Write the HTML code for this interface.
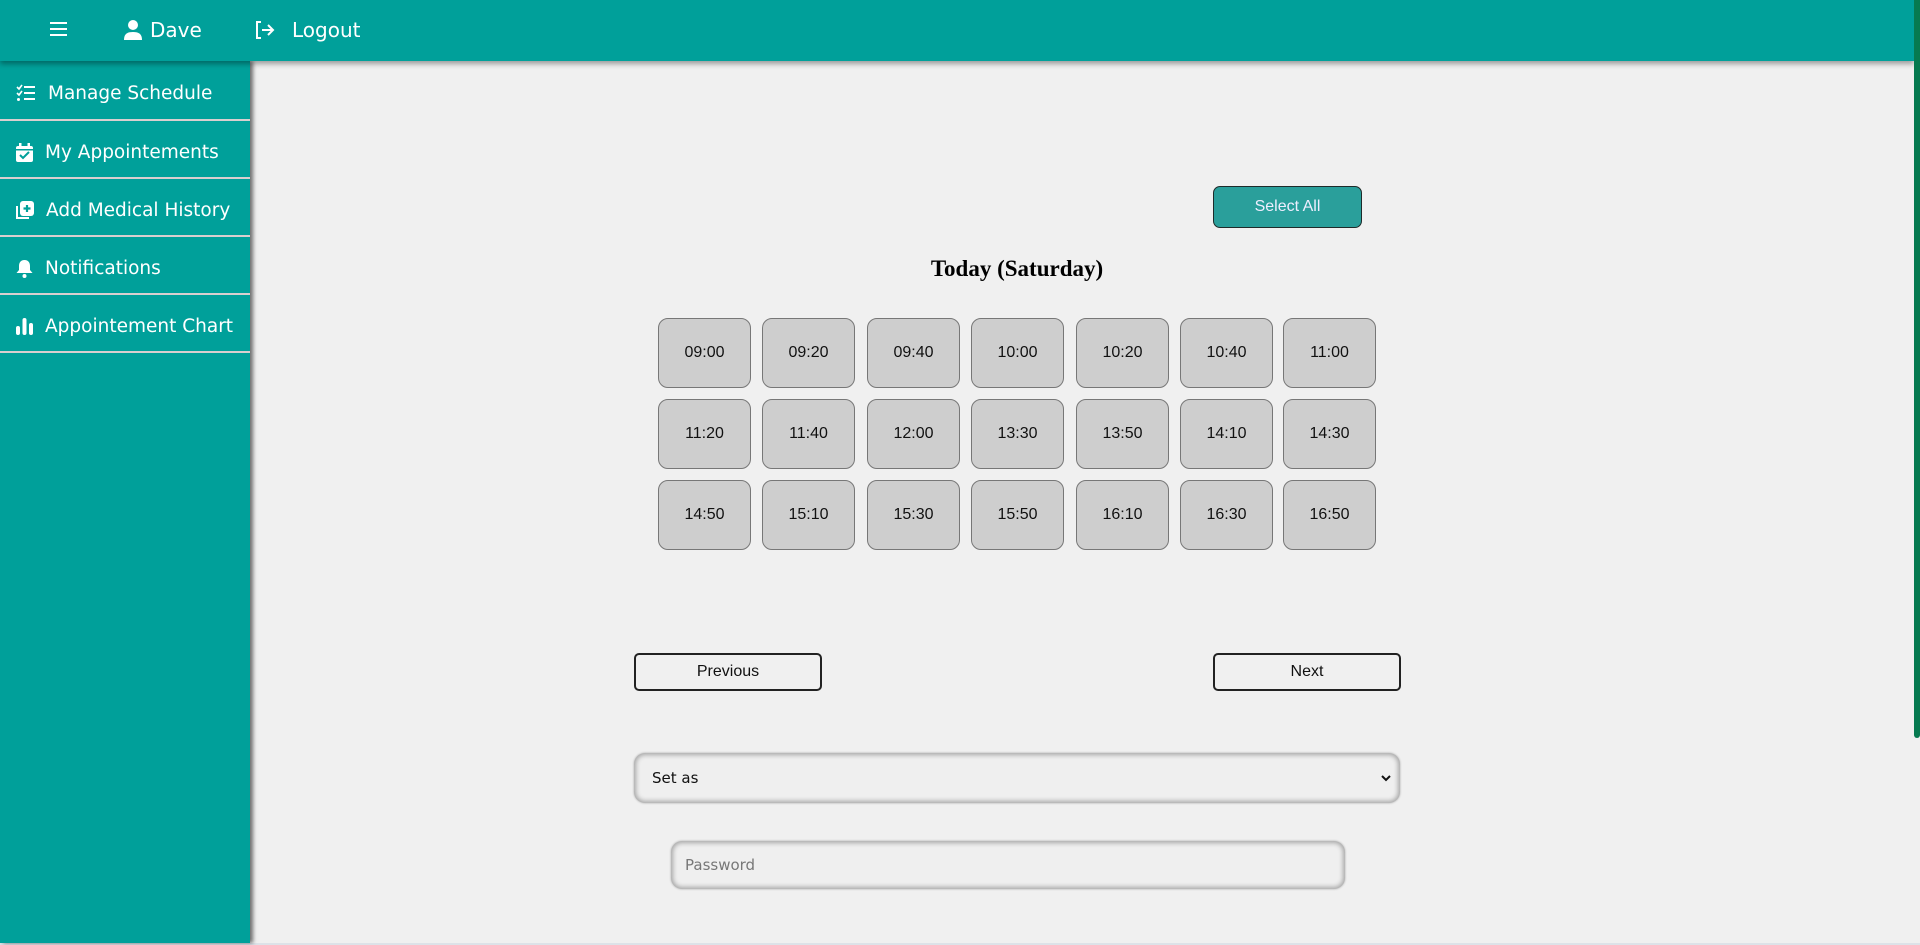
<!DOCTYPE html>
<html><head><meta charset="utf-8"><style>
*{box-sizing:border-box;margin:0;padding:0}
html,body{width:1920px;height:945px;overflow:hidden;background:#f0f0f0;font-family:"Liberation Sans",Arial,sans-serif}
.hdr{position:absolute;left:0;top:0;width:1914px;height:61px;background:#00a09a;box-shadow:0 3px 5px rgba(0,0,0,.35);z-index:3;color:#fff;font-family:"DejaVu Sans",sans-serif;font-size:20px}
.hdr .it{position:absolute;top:18px;display:flex;align-items:center;gap:8px}
.side{position:absolute;left:0;top:61px;width:250px;height:882px;background:#00a09a;box-shadow:3px 0 4px rgba(0,0,0,.55);z-index:2;color:#fff;font-family:"DejaVu Sans",sans-serif;font-size:18.5px}
.side .row{height:58px;border-bottom:2px solid #d9cfcf;display:flex;align-items:center;padding-left:16px;padding-top:6px;gap:12px}
.side .row:first-child{height:60px}
.scroll{position:absolute;right:0;top:0;width:6px;height:738px;background:#067a50;border-radius:0 0 3px 3px;z-index:4}
.sel{position:absolute;left:1213px;top:186px;width:149px;height:42px;background:#2a9f9b;border:1.5px solid #1e2b2a;border-radius:7px;color:#eef;font-size:16px;display:flex;align-items:center;justify-content:center}
.title{position:absolute;left:817px;width:400px;top:256px;text-align:center;font-family:"Liberation Serif",serif;font-weight:bold;font-size:23px;color:#000}
.cell{position:absolute;width:93px;height:70px;background:#cecece;border:1px solid #777;border-radius:10px;display:flex;align-items:center;justify-content:center;font-size:16px;color:#111}
.btn{position:absolute;top:653px;width:188px;height:38px;border:2px solid #222;border-radius:5px;display:flex;align-items:center;justify-content:center;font-size:16px;color:#111;background:#f0f0f0}
.inp{position:absolute;background:#efefef;border-radius:11px;box-shadow:inset 0 0 5px 2px rgba(0,0,0,.3),0 0 2px rgba(0,0,0,.3);font-family:"DejaVu Sans",sans-serif;font-size:15px;display:flex;align-items:center}
</style></head><body>
<div class="hdr">
 <div class="it" style="left:50px;top:21px"><svg width="17" height="16" viewBox="0 0 17 16"><path d="M0 2h17M0 8h17M0 14h17" stroke="#fff" stroke-width="2"/></svg></div>
 <div class="it" style="left:124px"><svg width="18" height="20" viewBox="0 0 18 20"><circle cx="9" cy="5" r="5" fill="#fff"/><path d="M0 20c0-6 3-8 9-8s9 2 9 8z" fill="#fff"/></svg><span>Dave</span></div>
 <div class="it" style="left:254px"><svg width="22" height="20" viewBox="0 0 22 20"><path d="M7 2H3v16h4" stroke="#fff" stroke-width="2" fill="none"/><path d="M8 10h11M14 5l5 5-5 5" stroke="#fff" stroke-width="2" fill="none"/></svg><span style="margin-left:8px">Logout</span></div>
</div>
<div class="side">
 <div class="row"><svg width="20" height="18" viewBox="0 0 20 18"><path d="M1 3l2 2 3-4M1 9l2 2 3-4" stroke="#fff" stroke-width="1.6" fill="none"/><circle cx="2.5" cy="15.5" r="1.5" fill="#fff"/><path d="M8 3h11M8 9h11M8 15h11" stroke="#fff" stroke-width="2"/></svg><span>Manage Schedule</span></div>
 <div class="row"><svg width="17" height="19" viewBox="0 0 17 19"><rect x="0" y="3" width="17" height="16" rx="2" fill="#fff"/><rect x="3" y="0" width="2.5" height="5" fill="#fff"/><rect x="11.5" y="0" width="2.5" height="5" fill="#fff"/><path d="M4 12l3 3 6-6" stroke="#00a09a" stroke-width="2" fill="none"/><rect x="0" y="6" width="17" height="1.5" fill="#00a09a"/></svg><span>My Appointements</span></div>
 <div class="row"><svg width="18" height="19" viewBox="0 0 18 19"><path d="M1 5v12h12" stroke="#fff" stroke-width="2" fill="none"/><rect x="4" y="0" width="14" height="15" rx="3" fill="#fff"/><path d="M11 4v7M7.5 7.5h7" stroke="#00a09a" stroke-width="2.2"/></svg><span>Add Medical History</span></div>
 <div class="row"><svg width="17" height="19" viewBox="0 0 17 19"><path d="M8.5 1c4 0 5.5 3 5.5 6v4l2.5 3H0.5L3 11V7c0-3 1.5-6 5.5-6z" fill="#fff"/><circle cx="8.5" cy="17" r="2" fill="#fff"/></svg><span>Notifications</span></div>
 <div class="row"><svg width="17" height="17" viewBox="0 0 17 17"><rect x="0" y="8" width="4" height="9" rx="2" fill="#fff"/><rect x="6.5" y="0" width="4" height="17" rx="2" fill="#fff"/><rect x="13" y="5" width="4" height="12" rx="2" fill="#fff"/></svg><span>Appointement Chart</span></div>
</div>
<div class="scroll"></div>
<div class="sel">Select All</div>
<div class="title">Today (Saturday)</div>
<div class="cell" style="left:658px;top:318px">09:00</div><div class="cell" style="left:762px;top:318px">09:20</div><div class="cell" style="left:867px;top:318px">09:40</div><div class="cell" style="left:971px;top:318px">10:00</div><div class="cell" style="left:1076px;top:318px">10:20</div><div class="cell" style="left:1180px;top:318px">10:40</div><div class="cell" style="left:1283px;top:318px">11:00</div>
<div class="cell" style="left:658px;top:399px">11:20</div><div class="cell" style="left:762px;top:399px">11:40</div><div class="cell" style="left:867px;top:399px">12:00</div><div class="cell" style="left:971px;top:399px">13:30</div><div class="cell" style="left:1076px;top:399px">13:50</div><div class="cell" style="left:1180px;top:399px">14:10</div><div class="cell" style="left:1283px;top:399px">14:30</div>
<div class="cell" style="left:658px;top:480px">14:50</div><div class="cell" style="left:762px;top:480px">15:10</div><div class="cell" style="left:867px;top:480px">15:30</div><div class="cell" style="left:971px;top:480px">15:50</div><div class="cell" style="left:1076px;top:480px">16:10</div><div class="cell" style="left:1180px;top:480px">16:30</div><div class="cell" style="left:1283px;top:480px">16:50</div>
<div class="btn" style="left:634px">Previous</div>
<div class="btn" style="left:1213px">Next</div>
<div class="inp" style="left:634px;top:753px;width:766px;height:50px;padding-left:18px;color:#111">Set as<svg style="position:absolute;right:9px;top:21px" width="10" height="8" viewBox="0 0 10 8"><path d="M1 2l4 4 4-4" stroke="#111" stroke-width="2" fill="none"/></svg></div>
<div class="inp" style="left:671px;top:841px;width:674px;height:48px;padding-left:14px;color:#777">Password</div>
<div style="position:absolute;left:0;top:943px;width:1920px;height:2px;background:#dde2e8"></div>
</body></html>
